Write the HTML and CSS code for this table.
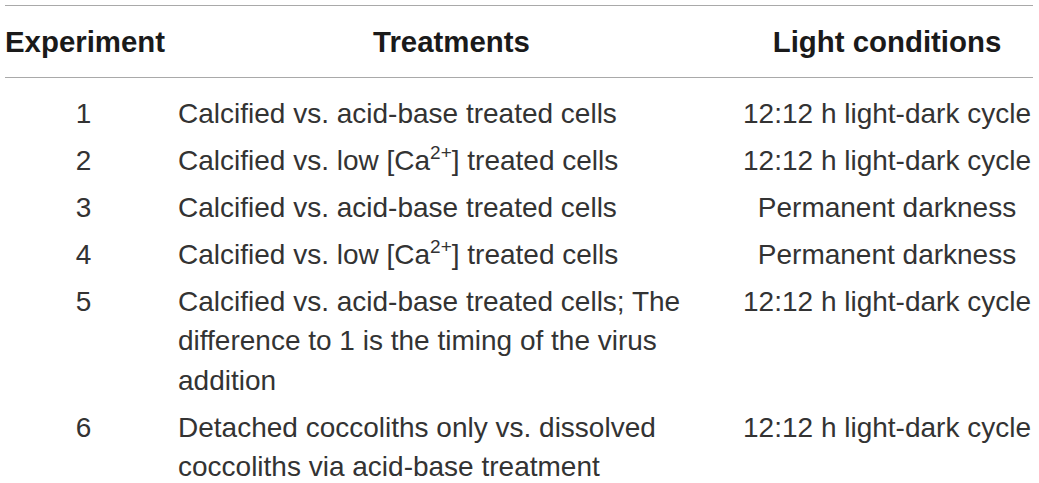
FILE: index.html
```html
<!DOCTYPE html>
<html lang="en">
<head>
<meta charset="utf-8">
<title>Experiments</title>
<link rel="stylesheet" href="styles.css">
</head>
<body>
<table class="exp-table">
  <colgroup>
    <col class="col-exp">
    <col class="col-treat">
    <col class="col-light">
  </colgroup>
  <thead>
    <tr>
      <th class="c-exp">Experiment</th>
      <th class="c-treat">Treatments</th>
      <th class="c-light">Light conditions</th>
    </tr>
  </thead>
  <tbody>
    <tr>
      <td class="c-exp">1</td>
      <td class="c-treat">Calcified vs. acid-base treated cells</td>
      <td class="c-light">12:12 h light-dark cycle</td>
    </tr>
    <tr>
      <td class="c-exp">2</td>
      <td class="c-treat">Calcified vs. low [Ca<sup class="sup">2+</sup>] treated cells</td>
      <td class="c-light">12:12 h light-dark cycle</td>
    </tr>
    <tr>
      <td class="c-exp">3</td>
      <td class="c-treat">Calcified vs. acid-base treated cells</td>
      <td class="c-light">Permanent darkness</td>
    </tr>
    <tr>
      <td class="c-exp">4</td>
      <td class="c-treat">Calcified vs. low [Ca<sup class="sup">2+</sup>] treated cells</td>
      <td class="c-light">Permanent darkness</td>
    </tr>
    <tr>
      <td class="c-exp">5</td>
      <td class="c-treat">Calcified vs. acid-base treated cells; The difference to 1 is the timing of the virus addition</td>
      <td class="c-light">12:12 h light-dark cycle</td>
    </tr>
    <tr>
      <td class="c-exp">6</td>
      <td class="c-treat">Detached coccoliths only vs. dissolved coccoliths via acid-base treatment</td>
      <td class="c-light">12:12 h light-dark cycle</td>
    </tr>
  </tbody>
</table>
</body>
</html>
```

FILE: styles.css
```css
html, body {
  margin: 0;
  padding: 0;
  background: #ffffff;
}

body {
  font-family: "Liberation Sans", Arial, Helvetica, sans-serif;
  color: #333333;
}

.exp-table {
  margin: 5px 0 0 5px;
  width: 1028px;
  table-layout: fixed;
  border-collapse: collapse;
  border-top: 1px solid #a9a9a9;
}

.col-exp { width: 165px; }
.col-treat { width: 563px; }
.col-light { width: 300px; }

.exp-table th,
.exp-table td {
  padding: 3.75px 8px;
  font-size: 28px;
  line-height: 39.5px;
  vertical-align: top;
}

.exp-table thead th {
  padding-top: 16px;
  padding-bottom: 15px;
  font-size: 29.4px;
  font-weight: bold;
  color: #1a1a1a;
  border-bottom: 1px solid #a9a9a9;
}

.exp-table tbody tr:first-child td {
  padding-top: 16px;
}

.exp-table .c-exp {
  padding-left: 0;
  text-align: center;
}

.exp-table .c-treat {
  text-align: left;
}

.exp-table thead .c-treat {
  text-align: center;
}

.exp-table .c-light {
  padding-right: 0;
  text-align: center;
}

.sup {
  font-size: 19px;
  line-height: 0;
  vertical-align: 11px;
}
```
